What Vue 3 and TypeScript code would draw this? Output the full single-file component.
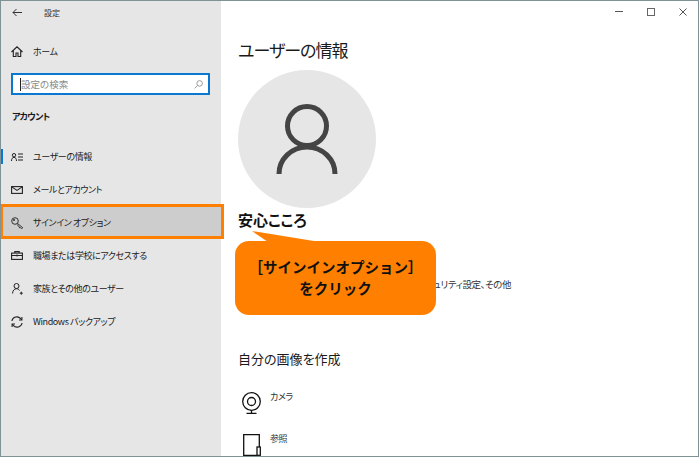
<script setup lang="ts">
type NavItem = { id: string; label: string; active?: boolean; selected?: boolean };

const navItems: NavItem[] = [
  { id: "user", label: "ユーザーの情報", active: true },
  { id: "mail", label: "メールとアカウント" },
  { id: "key", label: "サインイン オプション", selected: true },
  { id: "work", label: "職場または学校にアクセスする" },
  { id: "family", label: "家族とその他のユーザー" },
  { id: "sync", label: "Windows バックアップ" },
];
</script>

<template>
  <div class="window">
    <aside class="sidebar">
      <div class="titlebar">
        <span class="nav-icon">
          <svg width="10" height="9" viewBox="0 0 10 9" fill="none" stroke="#333" stroke-width="1">
            <path d="M10 4.500H1M4.500 1 1 4.500 4.500 8" />
          </svg>
        </span>
        <span class="app-title">設定</span>
      </div>

      <div class="home">
        <span class="nav-icon">
          <svg width="12" height="11" viewBox="0 0 12 11" fill="none" stroke="#222" stroke-width="1.100">
            <path d="M.5 6 6 .8 11.500 6M2.300 4.500v6h2.700V7h2v3.500h2.700v-6" />
          </svg>
        </span>
        <span>ホーム</span>
      </div>

      <div class="search">
        <span class="caret"></span>
        <span class="placeholder">設定の検索</span>
        <svg width="9" height="9" viewBox="0 0 9 9" fill="none" stroke="#9a9a9a" stroke-width="1">
          <circle cx="5.600" cy="3.400" r="2.800" />
          <path d="M3.600 5.400 .6 8.400" />
        </svg>
      </div>

      <div class="section">アカウント</div>

      <nav class="nav">
        <div
          v-for="item in navItems"
          :key="item.id"
          :class="['nav-item', item.active && 'active', item.selected && 'selected']"
        >
          <span class="nav-icon">
            <svg v-if="item.id === 'user'" width="12" height="8" viewBox="0 0 12 8" fill="none" stroke="#222" stroke-width="1">
              <circle cx="3" cy="2.200" r="1.700" />
              <path d="M.5 8c0-2.200 1-3.700 2.500-3.700S5.500 5.800 5.500 8M7 1h5M7 4h5M7 7h5" />
            </svg>
            <svg v-else-if="item.id === 'mail'" width="12" height="8" viewBox="0 0 12 8" fill="none" stroke="#222" stroke-width="1.100">
              <rect x=".6" y=".6" width="10.800" height="6.800" />
              <path d="M.8.900 6 4.400 11.200.900" />
            </svg>
            <svg v-else-if="item.id === 'key'" width="13" height="12" viewBox="0 0 13 12" fill="none" stroke="#333" stroke-width="1">
              <circle cx="4" cy="4" r="3.300" />
              <circle cx="3" cy="3" r=".7" />
              <path d="M6.400 6.300 11.800 10.800l-1.300.7-1-.8-.8.200-.6-1-.4-.9-1.800-1.500" />
            </svg>
            <svg v-else-if="item.id === 'work'" width="12" height="9" viewBox="0 0 12 9" fill="none" stroke="#222" stroke-width="1.100">
              <rect x=".6" y="2.100" width="10.800" height="6.300" />
              <path d="M3.800 2.100V.6h4.400v1.500M.6 4.500h10.800M6 3.500v2" />
            </svg>
            <svg v-else-if="item.id === 'family'" width="11" height="12" viewBox="0 0 11 12" fill="none" stroke="#222" stroke-width="1">
              <circle cx="4.500" cy="3" r="2.500" />
              <path d="M.6 10.500c0-2.800 1.600-4.800 3.900-4.800 1.300 0 2.400.7 3 1.800M7.800 10.200h3M9.300 8.700v3" />
            </svg>
            <svg v-else width="12" height="12" viewBox="0 0 12 12" fill="none" stroke="#222" stroke-width="1.100">
              <path d="M.9 5A5 5 0 0 1 9.700 2.700l1 1.100M1.300 8.200l1 1.100A5 5 0 0 0 11.100 7" />
              <path d="M10.900 1v3H8M1.100 11V8H4" />
            </svg>
          </span>
          <span class="nav-label">{{ item.label }}</span>
          <span v-if="item.selected" class="highlight"></span>
        </div>
      </nav>
    </aside>

    <main class="content">
      <div class="window-controls">
        <span class="min"></span>
        <span class="max"></span>
        <svg width="8" height="8" viewBox="0 0 8 8" fill="none" stroke="#555" stroke-width="1">
          <path d="M.5.500l7 7M7.500.500l-7 7" />
        </svg>
      </div>

      <h1>ユーザーの情報</h1>

      <div class="avatar">
        <svg width="66" height="72" viewBox="0 0 66 72" fill="none" stroke="#444" stroke-width="5">
          <circle cx="33" cy="23" r="19.500" />
          <path d="M5 71A28 27 0 0 1 61 71" />
        </svg>
      </div>

      <div class="name-block">
        <div class="name">安心こころ</div>
        <div class="callout">
          <svg class="tail" width="70" height="12" viewBox="0 0 70 12">
            <path d="M0 0 16 11H68Z" fill="#ff8000" />
          </svg>
          <span>［サインインオプション］</span>
          <span>をクリック</span>
        </div>
      </div>

      <p class="account-note">ュリティ設定、その他</p>

      <h2>自分の画像を作成</h2>

      <div class="picture-row">
        <svg width="19" height="22" viewBox="0 0 19 22" fill="none" stroke="#111" stroke-width="1.300">
          <circle cx="9.500" cy="9.500" r="8.800" />
          <circle cx="9.500" cy="9.500" r="4" />
          <path d="M9.500 18.300v3M4.500 21.300h10" />
        </svg>
        <span>カメラ</span>
      </div>
      <div class="picture-row browse">
        <svg width="18" height="22" viewBox="0 0 18 22" fill="none" stroke="#111" stroke-width="1.300">
          <path d="M14 21.300H.7V.7h15.600V13" />
          <rect x="14" y="13" width="3.300" height="8.300" />
        </svg>
        <span>参照</span>
      </div>
    </main>
  </div>
</template>

<style>
html,
body {
  margin: 0;
  background: #fff;
}
</style>

<style scoped>
.window {
  display: flex;
  box-sizing: border-box;
  width: 699px;
  height: 457px;
  overflow: hidden;
  border: 1px solid #7f9296;
  background: #fff;
  color: #1a1a1a;
  font-family: "Noto Sans CJK JP", "Noto Sans", sans-serif;
  font-size: 9px;
  letter-spacing: -0.4px;
  font-feature-settings: "palt";
}

.sidebar {
  flex: 0 0 220px;
  background: #e6e6e6;
}

.titlebar {
  display: flex;
  align-items: center;
  height: 22px;
}

.app-title {
  margin-left: 11px;
  font-size: 8px;
  letter-spacing: 0;
  color: #333;
}

.home {
  display: flex;
  align-items: center;
  height: 20px;
  margin-top: 18px;
}

.search {
  display: flex;
  align-items: center;
  box-sizing: border-box;
  width: 199px;
  height: 22px;
  margin: 12px 0 0 10px;
  padding: 0 5px 0 7px;
  border: 2px solid #0a78d0;
  background: #fff;
  color: #8a8a8a;
  font-size: 9.5px;
  letter-spacing: 0;
}

.caret {
  width: 1px;
  height: 13px;
  background: #222;
}

.placeholder {
  flex: 1;
}

.section {
  margin: 14px 0 0 11px;
  height: 16px;
  line-height: 16px;
  letter-spacing: -0.7px;
  font-weight: 700;
}

.nav {
  margin-top: 15px;
}

.nav-item {
  position: relative;
  display: flex;
  align-items: center;
  height: 33px;
}

.nav-item.active::before {
  content: "";
  position: absolute;
  left: 0;
  top: 9px;
  width: 2px;
  height: 15px;
  background: #0a78d0;
}

.nav-item.selected {
  background: #cdcdcd;
}

.nav-icon {
  display: flex;
  align-items: center;
  justify-content: center;
  flex: 0 0 32px;
}

.highlight {
  position: absolute;
  inset: -2px -3px 0 -1px;
  z-index: 3;
  border: 3px solid #ff8000;
}

.content {
  position: relative;
  flex: 1;
  min-width: 0;
  padding-left: 17px;
}

.window-controls {
  display: flex;
  align-items: center;
  justify-content: flex-end;
  gap: 24px;
  height: 21px;
  padding-right: 11px;
}

.min {
  width: 8px;
  height: 1px;
  background: #555;
}

.max {
  box-sizing: border-box;
  width: 8px;
  height: 8px;
  border: 1px solid #666;
}

h1 {
  margin: 15px 0 0;
  font-size: 17px;
  line-height: 26px;
  letter-spacing: -1px;
  font-weight: 400;
}

.avatar {
  display: flex;
  align-items: center;
  justify-content: center;
  width: 138px;
  height: 138px;
  margin-top: 7px;
  border-radius: 50%;
  background: #e6e6e6;
}

.name-block {
  position: relative;
}

.name {
  margin-top: 2px;
  font-size: 15px;
  line-height: 20px;
  letter-spacing: 0;
  font-weight: 700;
  color: #111;
}

.callout {
  position: absolute;
  top: 31px;
  left: -3px;
  z-index: 2;
  display: flex;
  flex-direction: column;
  align-items: center;
  justify-content: center;
  box-sizing: border-box;
  width: 201px;
  height: 74px;
  padding-bottom: 2px;
  border-radius: 14px;
  background: #ff8000;
  color: #111;
  font-size: 14.5px;
  line-height: 21px;
  letter-spacing: 0;
  font-weight: 700;
  font-feature-settings: normal;
}

.tail {
  position: absolute;
  top: -10px;
  left: 17px;
}

.account-note {
  width: 273px;
  margin: 47px 0 0;
  text-align: right;
  line-height: 14px;
  font-size: 9.500px;
  color: #333;
}

h2 {
  margin: 58px 0 0;
  font-size: 13px;
  line-height: 20px;
  letter-spacing: 0;
  font-weight: 400;
}

.picture-row {
  display: flex;
  align-items: flex-start;
  gap: 9px;
  margin: 23px 0 0 4px;
  color: #333;
}

.picture-row span {
  margin-top: -2px;
  line-height: 14px;
}

.picture-row.browse {
  margin: 20px 0 0 5px;
}
</style>
